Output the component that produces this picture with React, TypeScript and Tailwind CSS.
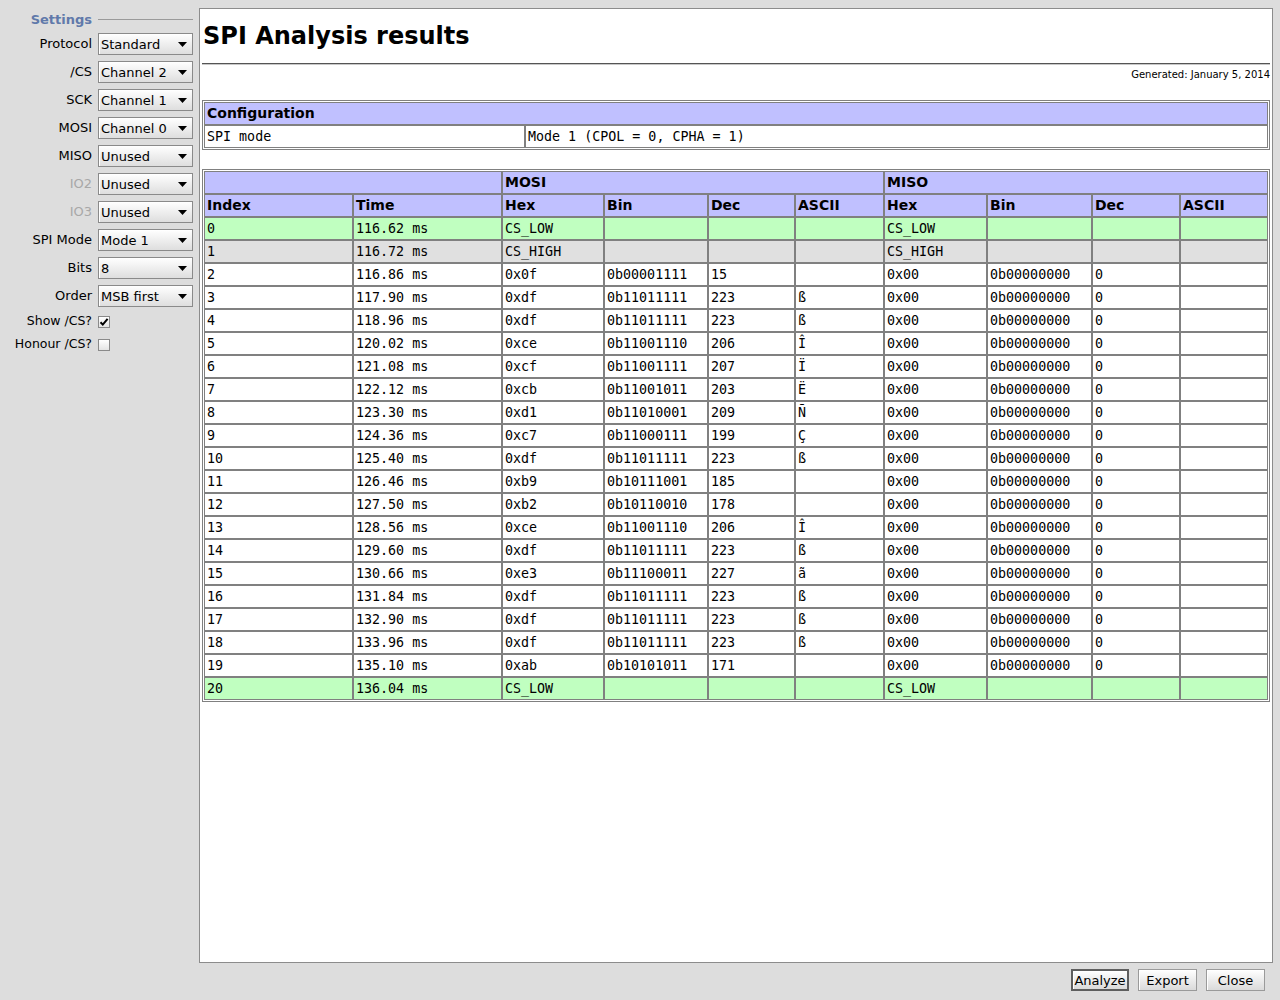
import React from "react";

const UI = { fontFamily: '"DejaVu Sans", Verdana, sans-serif' };
const MONO = { fontFamily: '"DejaVu Sans Mono", "Liberation Mono", monospace' };

type Row = {
  i: number;
  t: string;
  kind: "low" | "high" | "data";
  dec?: number;
  ascii?: string;
};

const rows: Row[] = [
  { i: 0, t: "116.62", kind: "low" },
  { i: 1, t: "116.72", kind: "high" },
  { i: 2, t: "116.86", kind: "data", dec: 15, ascii: "" },
  { i: 3, t: "117.90", kind: "data", dec: 223, ascii: "ß" },
  { i: 4, t: "118.96", kind: "data", dec: 223, ascii: "ß" },
  { i: 5, t: "120.02", kind: "data", dec: 206, ascii: "Î" },
  { i: 6, t: "121.08", kind: "data", dec: 207, ascii: "Ï" },
  { i: 7, t: "122.12", kind: "data", dec: 203, ascii: "Ë" },
  { i: 8, t: "123.30", kind: "data", dec: 209, ascii: "Ñ" },
  { i: 9, t: "124.36", kind: "data", dec: 199, ascii: "Ç" },
  { i: 10, t: "125.40", kind: "data", dec: 223, ascii: "ß" },
  { i: 11, t: "126.46", kind: "data", dec: 185, ascii: "" },
  { i: 12, t: "127.50", kind: "data", dec: 178, ascii: "" },
  { i: 13, t: "128.56", kind: "data", dec: 206, ascii: "Î" },
  { i: 14, t: "129.60", kind: "data", dec: 223, ascii: "ß" },
  { i: 15, t: "130.66", kind: "data", dec: 227, ascii: "ã" },
  { i: 16, t: "131.84", kind: "data", dec: 223, ascii: "ß" },
  { i: 17, t: "132.90", kind: "data", dec: 223, ascii: "ß" },
  { i: 18, t: "133.96", kind: "data", dec: 223, ascii: "ß" },
  { i: 19, t: "135.10", kind: "data", dec: 171, ascii: "" },
  { i: 20, t: "136.04", kind: "low" },
];

const settings = [
  { label: "Protocol", value: "Standard" },
  { label: "/CS", value: "Channel 2" },
  { label: "SCK", value: "Channel 1" },
  { label: "MOSI", value: "Channel 0" },
  { label: "MISO", value: "Unused" },
  { label: "IO2", value: "Unused", disabled: true },
  { label: "IO3", value: "Unused", disabled: true },
  { label: "SPI Mode", value: "Mode 1" },
  { label: "Bits", value: "8" },
  { label: "Order", value: "MSB first" },
];

const hex = (n: number) => "0x" + n.toString(16).padStart(2, "0");
const bin = (n: number) => "0b" + n.toString(2).padStart(8, "0");

const td = "border border-[#808080] px-[2px] h-[23px] py-0 text-left align-middle whitespace-nowrap overflow-hidden text-[13.33px] leading-[19px]";
const th = "border border-[#808080] px-[2px] h-[23px] py-0 text-left align-middle whitespace-nowrap bg-[#c0c0ff] font-bold text-[14px] leading-[19px]";

function Select({ value }: { value: string }) {
  return (
    <div className="flex-1 h-[22px] flex items-center border border-[#8a8a8a] bg-gradient-to-b from-white to-[#dedede] pl-[2px] pr-[5px] shadow-[inset_1px_1px_0_#ffffff]">
      <span className="flex-1 text-[13px] text-black leading-none">{value}</span>
      <svg width="9" height="5" viewBox="0 0 9 5">
        <path d="M0 0h9L4.5 5z" fill="#000" />
      </svg>
    </div>
  );
}

function Check({ checked }: { checked: boolean }) {
  return (
    <div className="w-[12px] h-[12px] border border-[#8a8a8a] bg-gradient-to-b from-white to-[#e4e4e4] flex items-center justify-center">
      {checked && (
        <svg width="10" height="10" viewBox="0 0 10 10">
          <path d="M1.5 5.2l2.3 2.4L8.6 1.8" stroke="#000" strokeWidth="2" fill="none" />
        </svg>
      )}
    </div>
  );
}

function Btn({ label, def }: { label: string; def?: boolean }) {
  return (
    <button
      className={
        "h-[22px] text-[13px] text-black bg-gradient-to-b from-white to-[#dadada] leading-none " +
        (def
          ? "w-[58px] border-2 border-[#5e5e5e] shadow-[inset_1px_1px_0_#ffffff]"
          : "w-[59px] border border-[#9a9a9a] shadow-[inset_1px_1px_0_#ffffff]")
      }
      style={UI}
    >
      {label}
    </button>
  );
}

export default function App() {
  return (
    <div className="w-[1280px] h-[1000px] flex flex-col bg-[#dddddd] overflow-hidden" style={UI}>
      <div className="flex-1 flex min-h-0">
        {/* Settings sidebar */}
        <div className="w-[199px] shrink-0 pr-[6px] pt-[11px] flex flex-col">
          <div className="flex items-center gap-[6px] h-[17px]">
            <span className="w-[92px] text-right text-[13px] font-bold text-[#6079aa] pt-px">Settings</span>
            <div className="flex-1 h-px bg-[#9a9a9a]" />
          </div>
          <div className="mt-[5px] flex flex-col gap-[6px]">
            {settings.map((s) => (
              <div key={s.label} className="flex items-center gap-[6px] h-[22px]">
                <span className={"w-[92px] text-right text-[13px] " + (s.disabled ? "text-[#a8a8a8]" : "text-black")}>
                  {s.label}
                </span>
                <Select value={s.value} />
              </div>
            ))}
            <div className="flex items-center gap-[6px] h-[17px]">
              <span className="w-[92px] text-right text-[12.5px] text-black">Show /CS?</span>
              <Check checked />
            </div>
            <div className="flex items-center gap-[6px] h-[17px]">
              <span className="w-[92px] text-right text-[12.5px] text-black">Honour /CS?</span>
              <Check checked={false} />
            </div>
          </div>
        </div>

        {/* Results panel */}
        <div className="flex-1 mt-[8px] mr-[7px] border border-[#8c8c8c] bg-white px-[2px] flex flex-col min-h-0">
          <h1 className="mt-[13px] ml-px text-[24px] leading-[28px] font-bold text-black">SPI Analysis results</h1>
          <div className="mt-[13px] h-[2px] border-t border-[#555555] border-b border-b-[#c8c8c8]" />
          <div className="mt-[4px] text-right text-[10px] leading-[12px] text-black">Generated: January 5, 2014</div>

          {/* Configuration */}
          <div className="mt-[19px] border border-[#808080] p-px">
            <table className="w-full table-fixed border-separate border-spacing-0">
              <colgroup>
                <col className="w-[321px]" />
                <col />
              </colgroup>
              <tbody>
                <tr>
                  <th colSpan={2} className={th + " text-[14.5px]"}>Configuration</th>
                </tr>
                <tr>
                  <td className={td} style={MONO}>SPI mode</td>
                  <td className={td} style={MONO}>Mode 1 (CPOL = 0, CPHA = 1)</td>
                </tr>
              </tbody>
            </table>
          </div>

          {/* Results table */}
          <div className="mt-[19px] border border-[#808080] p-px">
            <table className="w-full table-fixed border-separate border-spacing-0">
              <colgroup>
                <col className="w-[149px]" />
                <col className="w-[149px]" />
                <col className="w-[102px]" />
                <col className="w-[104px]" />
                <col className="w-[87px]" />
                <col className="w-[89px]" />
                <col className="w-[103px]" />
                <col className="w-[105px]" />
                <col className="w-[88px]" />
                <col className="w-[88px]" />
              </colgroup>
              <thead>
                <tr>
                  <th colSpan={2} className={th} />
                  <th colSpan={4} className={th}>MOSI</th>
                  <th colSpan={4} className={th}>MISO</th>
                </tr>
                <tr>
                  {["Index", "Time", "Hex", "Bin", "Dec", "ASCII", "Hex", "Bin", "Dec", "ASCII"].map((h, k) => (
                    <th key={k} className={th}>{h}</th>
                  ))}
                </tr>
              </thead>
              <tbody style={MONO}>
                {rows.map((r) => {
                  const bg = r.kind === "low" ? "bg-[#c0ffc0]" : r.kind === "high" ? "bg-[#e0e0e0]" : "bg-white";
                  if (r.kind !== "data") {
                    const label = r.kind === "low" ? "CS_LOW" : "CS_HIGH";
                    return (
                      <tr key={r.i} className={bg}>
                        <td className={td}>{r.i}</td>
                        <td className={td}>{r.t} ms</td>
                        <td className={td}>{label}</td>
                        <td className={td} />
                        <td className={td} />
                        <td className={td} />
                        <td className={td}>{label}</td>
                        <td className={td} />
                        <td className={td} />
                        <td className={td} />
                      </tr>
                    );
                  }
                  const d = r.dec ?? 0;
                  return (
                    <tr key={r.i} className={bg}>
                      <td className={td}>{r.i}</td>
                      <td className={td}>{r.t} ms</td>
                      <td className={td}>{hex(d)}</td>
                      <td className={td}>{bin(d)}</td>
                      <td className={td}>{d}</td>
                      <td className={td}>{r.ascii}</td>
                      <td className={td}>{hex(0)}</td>
                      <td className={td}>{bin(0)}</td>
                      <td className={td}>0</td>
                      <td className={td} />
                    </tr>
                  );
                })}
              </tbody>
            </table>
          </div>
        </div>
      </div>

      {/* Buttons */}
      <div className="h-[37px] shrink-0 flex justify-end items-start pt-[6px] pr-[15px] gap-[9px]">
        <Btn label="Analyze" def />
        <Btn label="Export" />
        <Btn label="Close" />
      </div>
    </div>
  );
}
